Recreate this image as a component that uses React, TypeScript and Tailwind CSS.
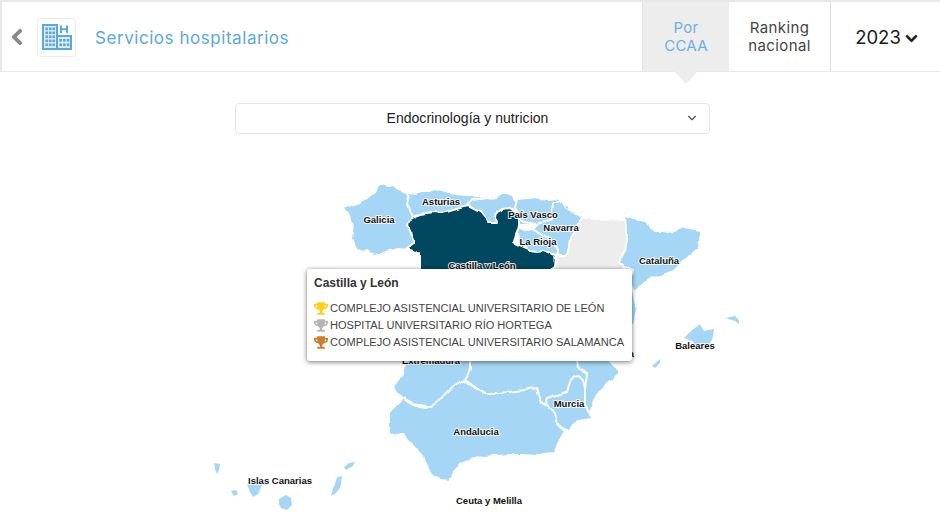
import { FaChevronLeft, FaChevronDown, FaTrophy } from "react-icons/fa";
import { ChevronDown } from "lucide-react";

const light = "#a6d6f5";
const dark = "#02465f";
const gray = "#ededed";

const regions: { d: string; fill: string }[] = [
  { fill: light, d: "344,208 352,205 360,201 367,198 375,191 378,185 382,183 388,186 393,186 403,191 412,196 416,212 416,225 418,238 416,252 398,250 390,251 382,254 375,256 367,250 362,252 357,251 354,244 352,238 353,231 352,225 350,220 349,215" },
  { fill: light, d: "407,192 415,193 423,191 431,191 440,189 448,193 457,194 467,195 484,197 484,215 460,218 433,218 412,218 408,203" },
  { fill: light, d: "472,200 478,199 488,198 497,197 502,194 507,194 512,196 515,199 530,206 530,225 500,225 487,222 478,214 466,207" },
  { fill: light, d: "517,199 527,198 537,197 546,200 556,199 570,205 570,225 547,224 535,224 524,222 516,217 517,212 515,208" },
  { fill: light, d: "553,203 558,203 563,201 565,205 568,209 575,212 583,216 590,240 590,260 567,262 545,245 530,234 536,227 540,222 547,221 551,219 552,212" },
  { fill: light, d: "516,228 527,229 537,231 545,236 553,241 558,250 558,262 537,262 520,255 518,240" },
  { fill: dark, d: "407,225 412,217 420,214 427,213 434,212 440,213 447,212 453,210 461,208 468,206 474,209 480,212 484,217 488,222 492,222 497,222 496,216 497,212 503,209 510,208 514,211 517,215 518,221 518,227 515,234 513,242 521,246 530,250 537,251 543,250 549,252 555,255 556,260 556,265 552,268 550,275 420,275 420,260 420,253 414,251 407,249 411,245 415,242 411,233" },
  { fill: gray, d: "583,217 595,219 606,220 616,219 627,221 627,235 627,248 625,258 622,275 560,275 555,268 556,255 567,255 569,246 570,238 576,228" },
  { fill: light, d: "626,216 632,217 637,219 641,219 645,221 648,225 650,229 656,231 663,231 668,232 673,231 678,228 683,226 691,229 701,231 700,240 699,248 692,254 684,261 679,266 674,271 663,275 651,279 642,285 634,291 630,283 632,270 626,267 620,263 622,256 625,250 627,241 627,233" },
  { fill: light, d: "612,288 633,291 637,310 633,330 626,350 608,359 621,373 613,380 604,388 599,394 594,401 592,406 591,412 583,410 576,390 570,370 565,340 590,310" },
  { fill: light, d: "405,300 480,300 480,380 470,395 462,400 446,405 433,408 425,406 419,405 413,404 408,400 403,398 398,394 394,388 398,380 402,373 404,365" },
  { fill: light, d: "470,300 575,300 577,360 578,367 582,370 587,373 586,382 585,390 585,405 570,410 545,410 530,400 500,400 485,398 475,387 465,380 468,375 470,370" },
  { fill: light, d: "547,398 556,395 567,392 569,385 572,378 577,376 582,377 584,384 585,390 585,398 585,405 588,411 593,419 585,420 577,421 571,428 565,434 560,430 553,415 549,406 545,403" },
  { fill: light, d: "389,412 396,405 403,398 408,402 413,405 420,407 427,408 433,405 440,400 443,396 447,392 455,385 463,380 474,387 485,393 497,393 510,392 524,390 537,387 539,395 542,403 547,406 553,410 555,417 557,423 561,427 566,430 560,441 554,453 544,454 535,456 523,455 510,455 497,456 483,457 471,460 461,464 454,472 448,481 441,480 435,478 431,473 427,468 424,462 422,456 412,445 403,434 396,435 389,436" },
];

const islands: string[] = [
  "684,338 691,331 700,324 702,328 704,331 708,330 714,329 713,336 711,342 706,346 700,349 696,345 692,341",
  "726,318 735,316 739,320 739,324 735,321 731,320",
  "652,366 660,359 660,363 655,368",
  "214,463 220,464 219,470 217,474 215,469",
  "231,491 236,490 238,494 234,496",
  "247,484 255,484 262,484 260,490 258,494 253,497 250,492",
  "279,499 286,495 291,498 292,505 287,510 281,508 279,504",
  "337,477 342,476 341,484 340,488 336,493 331,496 333,489 335,484",
  "344,467 349,463 355,462 353,466 346,470",
];

const labels: [string, number, number][] = [
  ["Galicia", 379, 223],
  ["Asturias", 441, 205],
  ["País Vasco", 533, 218],
  ["Navarra", 561, 231],
  ["La Rioja", 538, 245],
  ["Castilla y León", 482, 269],
  ["Cataluña", 659, 264],
  ["Baleares", 695, 349],
  ["Extremadura", 431, 364],
  ["Murcia", 569, 407],
  ["Andalucia", 476, 435],
  ["Islas Canarias", 280, 484],
  ["Ceuta y Melilla", 489, 504],
];

const hospitals: [string, string][] = [
  ["#fdd01c", "COMPLEJO ASISTENCIAL UNIVERSITARIO DE LEÓN"],
  ["#b5b5b5", "HOSPITAL UNIVERSITARIO RÍO HORTEGA"],
  ["#c97f2c", "COMPLEJO ASISTENCIAL UNIVERSITARIO SALAMANCA"],
];

function HospitalIcon() {
  const c = "#5ba8dc";
  const win = [0, 1, 2, 3, 4];
  return (
    <svg width="30" height="26" viewBox="0 0 30 26" fill="none">
      <rect x="1" y="1" width="14" height="24" fill="#dcecf8" stroke={c} strokeWidth="2" />
      {win.map((r) =>
        [0, 1, 2].map((k) => (
          <rect key={`${r}${k}`} x={3.4 + k * 3.5} y={3.5 + r * 4} width="2.6" height="2.6" fill={c} />
        ))
      )}
      <path d="M19 1.5v7.5M25 1.5v7.5M19 5.2h6" stroke={c} strokeWidth="2" />
      <rect x="15" y="12" width="14" height="13" fill="#dcecf8" stroke={c} strokeWidth="2" />
      {[0, 1].map((r) =>
        [0, 1, 2].map((k) => (
          <rect key={`b${r}${k}`} x={17.4 + k * 3.7} y={15 + r * 4.5} width="2.6" height="2.6" fill={c} />
        ))
      )}
    </svg>
  );
}

export default function App() {
  return (
    <div className="relative w-[940px] h-[526px] overflow-hidden bg-white font-['Liberation_Sans',sans-serif]">
      <header className="flex h-[72px] items-stretch border-t-2 border-l-2 border-b border-[#e8e8e8] font-['Inter',sans-serif]">
        <div className="flex flex-1 items-center pt-[1px]">
          <FaChevronLeft className="ml-[8px] h-[18px] w-[14px] shrink-0 stroke-[30px] text-[#8a8a8a]" />
          <div className="ml-[13px] flex h-[39px] w-[39px] shrink-0 items-center justify-center rounded-[4px] border border-[#eeeae6]">
            <HospitalIcon />
          </div>
          <span className="ml-[19px] pt-[3px] text-[17px] tracking-[0.55px] text-[#5ba8dc]">Servicios hospitalarios</span>
        </div>
        <div className="flex w-[87px] items-center justify-center border-l border-[#e2e2e2] bg-[#ededed] pt-[1px] text-center text-[15px] leading-[18px] tracking-[0.3px] text-[#6fb0e0]">
          Por<br />CCAA
        </div>
        <div className="flex w-[102px] items-center justify-center border-r border-[#e2e2e2] pt-[1px] text-center text-[15px] leading-[18px] tracking-[0.4px] text-[#444444]">
          Ranking<br />nacional
        </div>
        <div className="flex w-[109px] items-center justify-center gap-[4px] pl-[2px] pt-[3px] text-[18.5px] text-[#1c1c1c]">
          2023
          <FaChevronDown className="stroke-[30px] text-[13px]" />
        </div>
      </header>
      <div className="absolute left-[674px] top-[71px] h-0 w-0 border-x-[12px] border-t-[13px] border-x-transparent border-t-[#ededed]" />

      <div className="flex justify-center pt-[31px] pl-[5px]">
        <div className="relative flex h-[31px] w-[475px] items-center justify-center rounded-[4px] border border-[#e6e6e6] pr-[10px] text-[14px] tracking-[0.03px] text-[#222222]">
          Endocrinología y nutricion
          <ChevronDown className="absolute right-[10px] top-[7px] h-[14px] w-[14px] text-[#555555]" strokeWidth={2} />
        </div>
      </div>

      <svg className="block" width="940" height="392" viewBox="0 134 940 392">
        <defs>
          <filter id="wiggle" x="0" y="134" width="940" height="392" filterUnits="userSpaceOnUse" primitiveUnits="userSpaceOnUse">
            <feTurbulence type="fractalNoise" baseFrequency="0.09" numOctaves="2" seed="4" result="n" />
            <feDisplacementMap in="SourceGraphic" in2="n" scale="5" xChannelSelector="R" yChannelSelector="G" />
          </filter>
        </defs>
        <g filter="url(#wiggle)">
          {regions.map((r, i) => (
            <polygon key={i} points={r.d} fill={r.fill} stroke="#ffffff" strokeWidth="2" strokeLinejoin="round" />
          ))}
        </g>
        {islands.map((p, i) => (
          <polygon key={i} points={p} fill={light} />
        ))}
        <text x="634" y="357" textAnchor="end" fontFamily="Liberation Sans" fontWeight="700" fontSize="9.5" fill="#111">Valencia</text>
        {labels.map(([t, x, y]) => (
          <text
            key={t}
            x={x}
            y={y}
            textAnchor="middle"
            fontFamily="Liberation Sans"
            fontWeight="700"
            fontSize="9.5"
            fill="#111111"
            stroke="#ffffff"
            strokeWidth="2"
            strokeOpacity="0.85"
            paintOrder="stroke"
          >
            {t}
          </text>
        ))}
      </svg>

      <div className="absolute left-[307px] top-[269px] h-[92px] w-[325px] rounded-[3px] bg-white pl-[7px] pt-[7px] shadow-[0_1px_5px_rgba(0,0,0,0.55)]">
        <div className="h-[22px] text-[12px] leading-[14px] font-bold text-[#333333]">Castilla y León</div>
        <div className="mt-[2px] flex flex-col">
          {hospitals.map(([c, t]) => (
            <div key={t} className="flex h-[17px] items-center gap-[2px] whitespace-nowrap text-[11.05px] text-[#444444]">
              <FaTrophy className="h-[13px] w-[14px] shrink-0" style={{ color: c }} />
              {t}
            </div>
          ))}
        </div>
      </div>
    </div>
  );
}
